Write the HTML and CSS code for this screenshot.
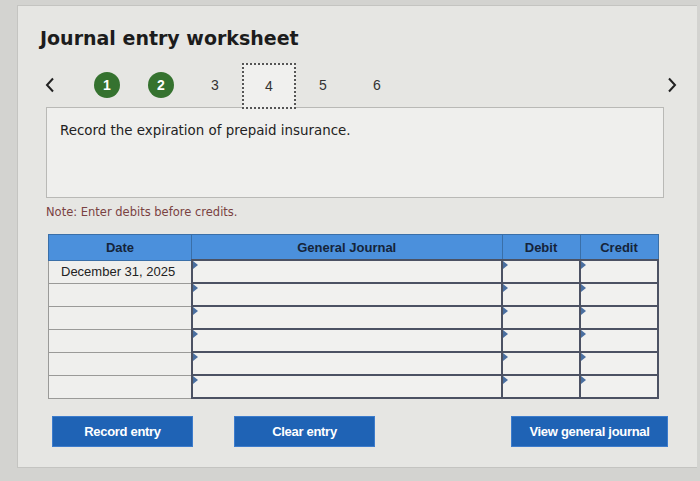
FILE: index.html
```html
<!DOCTYPE html>
<html lang="en">
<head>
  <meta charset="UTF-8">
  <title>Journal entry worksheet</title>
  <link rel="stylesheet" href="styles.css">
</head>
<body>
  <div class="panel">
    <h1 class="title">Journal entry worksheet</h1>

    <!-- step navigation -->
    <div class="steps">
      <span class="arrow">
        <svg width="10" height="16" viewBox="0 0 10 16"><polyline points="8,1.5 2,8 8,14.5" fill="none" stroke="#222" stroke-width="2"/></svg>
      </span>
      <span class="step"><span class="done">1</span></span>
      <span class="step"><span class="done">2</span></span>
      <span class="step">3</span>
      <span class="step"><span class="current">4</span></span>
      <span class="step">5</span>
      <span class="step">6</span>
      <span class="arrow next">
        <svg width="10" height="16" viewBox="0 0 10 16"><polyline points="2,1.5 8,8 2,14.5" fill="none" stroke="#222" stroke-width="2"/></svg>
      </span>
    </div>

    <div class="question">Record the expiration of prepaid insurance.</div>
    <p class="note">Note: Enter debits before credits.</p>

    <table class="journal">
      <thead>
        <tr>
          <th class="c-date">Date</th>
          <th class="c-acct">General Journal</th>
          <th class="c-amt">Debit</th>
          <th class="c-amt">Credit</th>
        </tr>
      </thead>
      <tbody id="rows"></tbody>
    </table>

    <div class="actions">
      <button class="btn">Record entry</button>
      <button class="btn">Clear entry</button>
      <button class="btn wide">View general journal</button>
    </div>
  </div>

  <script>
    // build the six entry rows
    const rows = document.getElementById('rows');
    for (let i = 0; i < 6; i++) {
      const tr = document.createElement('tr');
      tr.innerHTML = `
        <td class="date">${i === 0 ? 'December 31, 2025' : ''}</td>
        <td class="field"></td>
        <td class="field"></td>
        <td class="field"></td>
      `;
      rows.appendChild(tr);
    }
  </script>
</body>
</html>
```

FILE: styles.css
```css
body {
  margin: 0;
  background-color: #d3d3d0;
  font-family: "DejaVu Sans", Verdana, sans-serif;
  color: #222;
}
.panel {
  margin: 5px 3px 0 17px;
  height: 440px;
  padding: 21px 0 0 22px;
  background-color: #e6e6e3;
  border: 1px solid #c4c4c1;
  border-right: none;
}
.title {
  margin: 0;
  font-size: 19px;
  line-height: 23px;
  font-weight: bold;
  color: #1c1c1c;
}

/* Steps */
.steps {
  display: flex;
  align-items: center;
  height: 45px;
  margin-top: 12px;
  margin-right: 15px;
  font-family: "Liberation Sans", Arial, sans-serif;
  font-size: 14px;
  color: #333;
}
.arrow {
  width: 20px;
  display: flex;
  justify-content: center;
  margin-right: 20px;
}
.arrow.next {
  margin-left: auto;
  margin-right: 0;
}
.step {
  width: 54px;
  display: flex;
  justify-content: center;
}
.done {
  width: 26px;
  height: 26px;
  border-radius: 50%;
  background-color: #35722f;
  color: #fff;
  font-weight: bold;
  display: flex;
  align-items: center;
  justify-content: center;
}
.current {
  width: 52px;
  height: 42px;
  border: 2px dotted #555;
  background-color: #f0f0ee;
  display: flex;
  align-items: center;
  justify-content: center;
  margin-bottom: -3px;
}

/* Question box */
.question {
  width: 590px;
  height: 75px;
  margin-left: 6px;
  padding: 14px 13px 0;
  background-color: #efefed;
  border: 1px solid #b9b9b6;
  font-size: 13.4px;
  line-height: 18px;
  color: #222;
}
.note {
  margin: 7px 0 0 6px;
  font-size: 11.5px;
  line-height: 14px;
  color: #7a4242;
}

/* Journal table */
.journal {
  margin: 15px 0 0 8px;
  width: 611px;
  border-collapse: collapse;
  font-family: "Liberation Sans", Arial, sans-serif;
  font-size: 13px;
}
.journal th {
  height: 24px;
  padding: 0;
  background-color: #4b90dc;
  color: #15243a;
  font-weight: bold;
  border: 1px solid #3a6fa8;
}
.c-date { width: 142px; }
.c-amt { width: 77px; }
.journal td {
  height: 21px;
  padding: 0;
}
.date {
  padding-left: 12px !important;
  background-color: #efefed;
  border: 1px solid #9a9a98;
  color: #222;
}
.field {
  position: relative;
  background-color: #f1f1ef;
  border: 2px solid #4c5263;
}
.field::before {
  content: "";
  position: absolute;
  top: 0;
  left: 0;
  border-top: 4px solid transparent;
  border-bottom: 4px solid transparent;
  border-left: 5px solid #4a6fa0;
}

/* Buttons */
.actions {
  display: flex;
  margin: 17px 0 0 12px;
  width: 616px;
}
.btn {
  width: 141px;
  height: 31px;
  margin-right: 41px;
  background-color: #1f63b5;
  color: #fff;
  border: 1px solid #3d7ccc;
  font-family: "Liberation Sans", Arial, sans-serif;
  font-size: 13px;
  font-weight: bold;
  letter-spacing: -0.3px;
}
.btn.wide {
  width: 157px;
  margin-left: auto;
  margin-right: 0;
}
```
